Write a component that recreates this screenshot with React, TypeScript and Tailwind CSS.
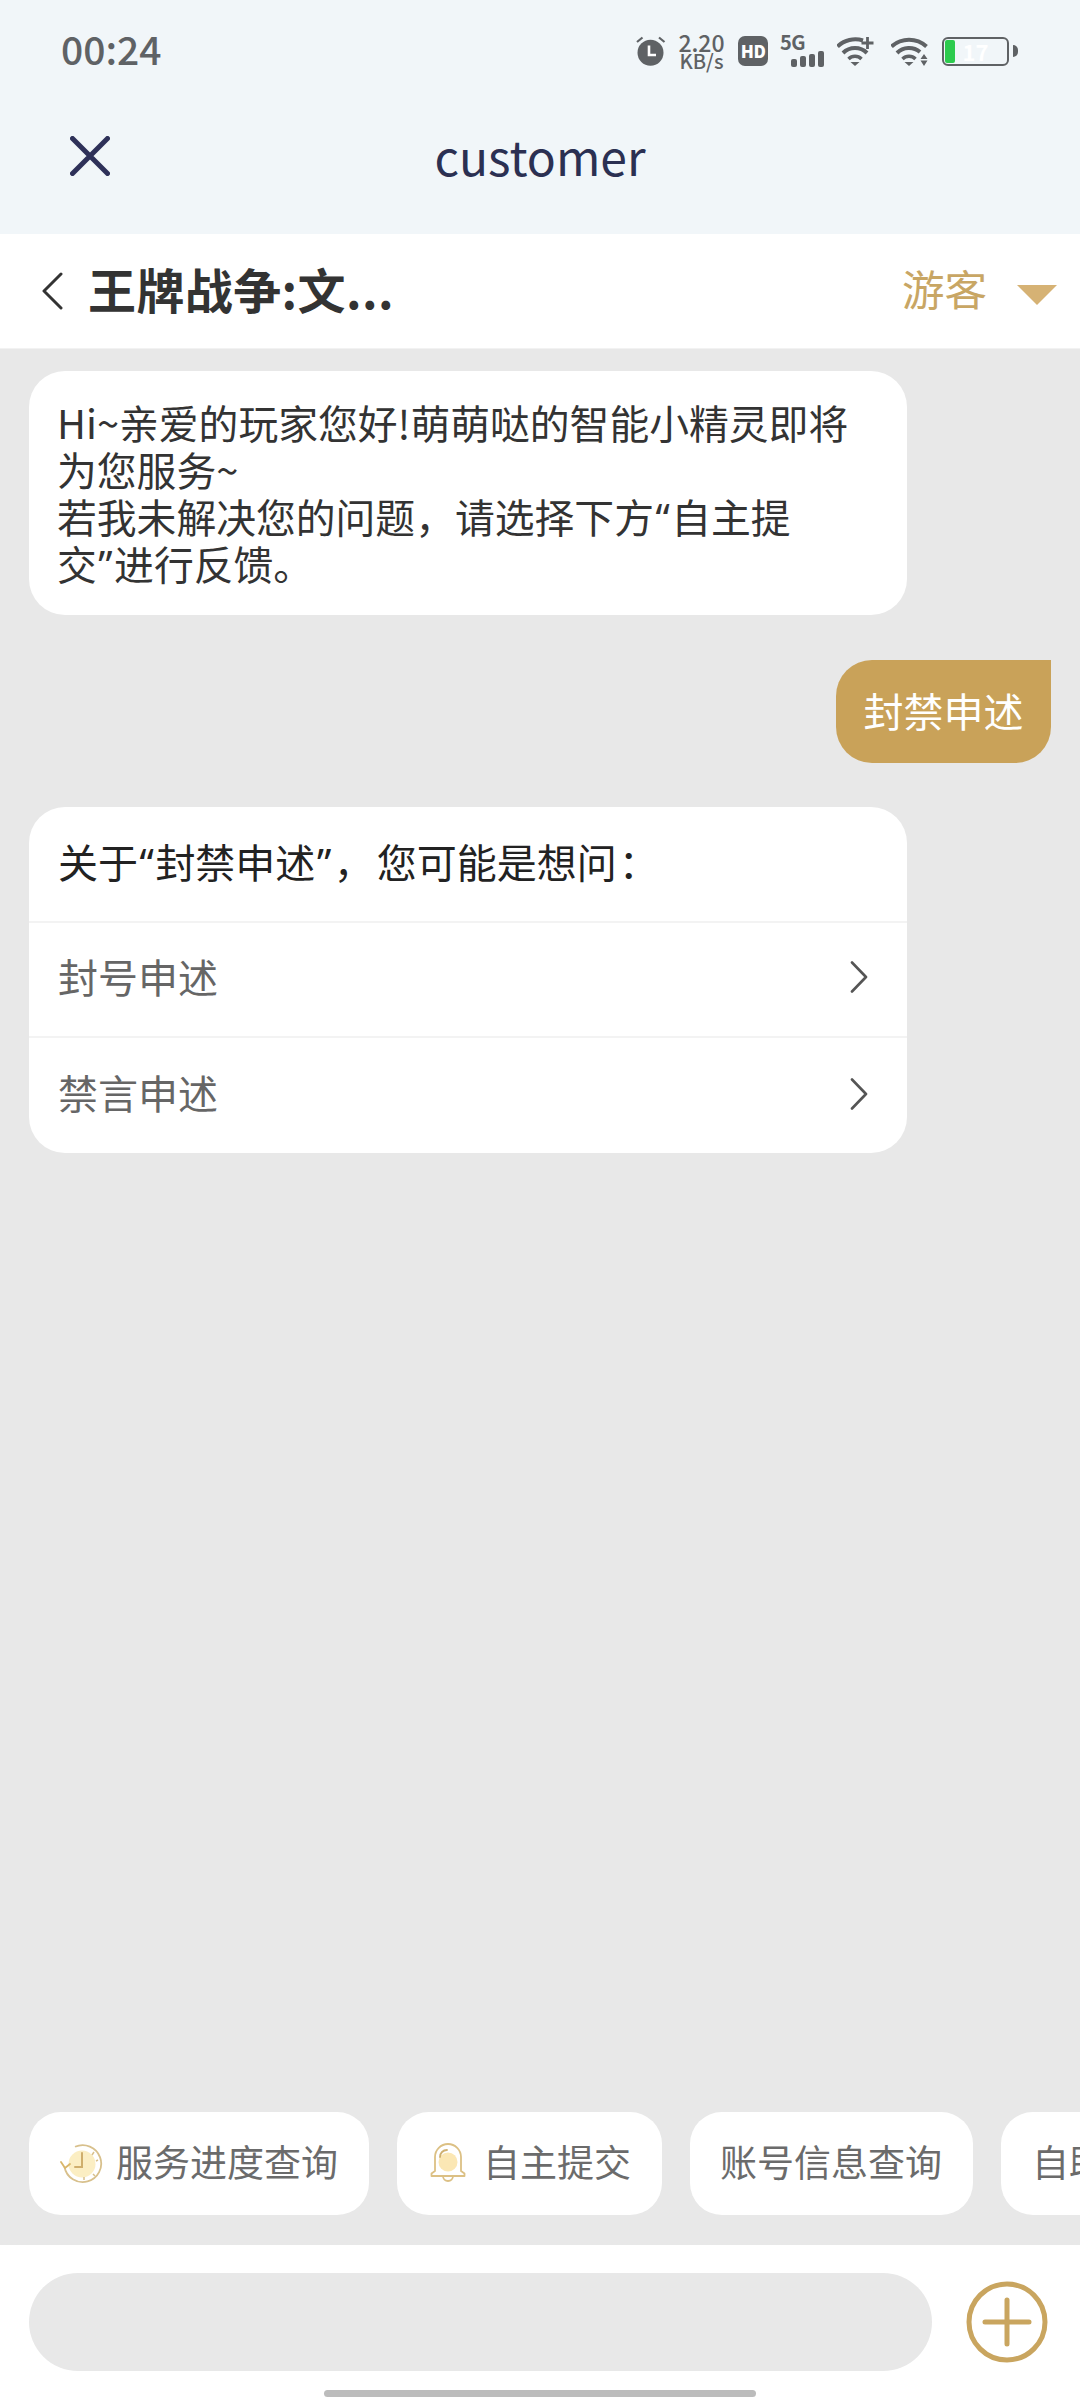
const font = { fontFamily: '"Noto Sans CJK SC", "Noto Sans", sans-serif' };

// curly quotes are full width in the CJK face, the reference has the narrow ones
function Q({ c }: { c: string }) {
  return <span className="leading-none px-[1.5px]" style={{ fontFamily: '"Noto Sans", sans-serif' }}>{c}</span>;
}

function Alarm() {
  return (
    <svg width="30" height="30" viewBox="0 0 30 30" fill="none">
      <circle cx="14.500" cy="16.800" r="13" fill="#5f6265" />
      <path d="M1 6l5.500-4.500M28.500 6 23 1.500" stroke="#5f6265" strokeWidth="2.200" />
      <path d="M13 9.500V19h7" stroke="#fff" strokeWidth="2.600" />
    </svg>
  );
}

function Signal() {
  return (
    <div className="relative w-[44px] h-[31px]">
      <span className="absolute left-0 top-[-8px] text-[20px] leading-[28px] font-bold text-[#5f6265] tracking-[-0.5px]">5G</span>
      <div className="absolute right-0 bottom-0 flex items-end gap-[3px]">
        <div className="w-[6px] h-[8px] rounded-[2px] bg-[#5f6265]" />
        <div className="w-[6px] h-[11px] rounded-[2px] bg-[#5f6265]" />
        <div className="w-[6px] h-[13px] rounded-[2px] bg-[#5f6265]" />
        <div className="w-[6px] h-[16px] rounded-[2px] bg-[#5f6265]" />
      </div>
    </div>
  );
}

function Wifi({ extra }: { extra: "plus" | "arrows" }) {
  return (
    <svg width="37" height="29" viewBox="0 0 37 29" fill="none">
      {extra === "plus" ? (
        <path d="M0.500 9.500A26 26 0 0 1 26 3.500" stroke="#5f6265" strokeWidth="4" />
      ) : (
        <path d="M0.500 9.500A26 26 0 0 1 35.500 9.500" stroke="#5f6265" strokeWidth="4" />
      )}
      <path d={extra === "plus" ? "M6 16A17 17 0 0 1 30 16" : "M6 16A17 17 0 0 1 29 15"} stroke="#5f6265" strokeWidth="4" />
      <path d="M11.500 22A9 9 0 0 1 24.500 22" stroke="#5f6265" strokeWidth="3.400" />
      <path d="M13.500 25h9L18 29z" fill="#5f6265" />
      {extra === "plus" ? (
        <path d="M30.500 0v12M24.500 6h12" stroke="#5f6265" strokeWidth="2.800" />
      ) : (
        <path d="M33 17l3.500 5h-7zM33 29l3.500-5.500h-7z" fill="#5f6265" />
      )}
    </svg>
  );
}

function Battery() {
  return (
    <div className="flex items-center gap-[4px]">
      <div className="relative w-[67px] h-[29px] rounded-[6px] border-2 border-[#5f6265] p-[1px]">
        <div className="w-[10px] h-full rounded-[2px] bg-[#2dcb4e]" />
        <span className="absolute inset-0 flex items-center justify-center text-[22px] leading-none font-bold text-white">17</span>
      </div>
      <div className="w-[5px] h-[12px] rounded-r-full bg-[#5f6265]" />
    </div>
  );
}

function StatusBar() {
  return (
    <div className="h-[102px] pl-[61px] pr-[62px] flex items-center justify-between">
      <span className="text-[39px] font-medium text-[#5f6265] mb-[5px]">00:24</span>
      <div className="flex items-center">
        <Alarm />
        <div className="ml-[13px] w-[45px] pb-[2px] flex flex-col items-center text-[#5f6265]">
          <span className="text-[23px] leading-[20px] font-medium">2.20</span>
          <span className="text-[20px] leading-[17px] font-medium">KB/s</span>
        </div>
        <div className="ml-[14px] w-[30px] h-[30px] rounded-[7px] bg-[#5f6265] flex items-center justify-center text-[17px] font-black text-white tracking-[-0.5px]">
          HD
        </div>
        <div className="ml-[12px]"><Signal /></div>
        <div className="ml-[13px]"><Wifi extra="plus" /></div>
        <div className="ml-[17px]"><Wifi extra="arrows" /></div>
        <div className="ml-[14px]"><Battery /></div>
      </div>
    </div>
  );
}

function ChatHeader() {
  return (
    <div className="h-[115px] bg-white pl-[41px] pr-[23px] flex items-center justify-between border-b border-[#f2f2f2]">
      <div className="flex items-center gap-[25px]">
        <svg width="22" height="38" viewBox="0 0 22 38" fill="none">
          <path d="M20 2 3 19l17 17" stroke="#333" strokeWidth="3" strokeLinecap="round" strokeLinejoin="round" />
        </svg>
        <span className="text-[48px] font-bold text-[#333] tracking-[0.4px] mb-[6px]">王牌战争:文...</span>
      </div>
      <div className="flex items-center gap-[30px]">
        <span className="text-[42.500px] text-[#c8a664] mb-[6px]">游客</span>
        <div className="w-0 h-0 border-x-[20px] border-x-transparent border-t-[20px] border-t-[#d6b274] mt-[8px]" />
      </div>
    </div>
  );
}

function QuestionRow({ label }: { label: string }) {
  return (
    <div className="h-[115px] last:pt-[3px] border-t-2 border-[#f3f3f3] pl-[29px] pr-[39px] flex items-center justify-between text-[40px] text-[#666]">
      <span className="mb-[8px]">{label}</span>
      <svg width="18" height="32" viewBox="0 0 18 32" fill="none" className="mb-[5px]">
        <path d="M2 1.500 16 16 2 30.500" stroke="#555" strokeWidth="2.600" strokeLinecap="round" strokeLinejoin="round" />
      </svg>
    </div>
  );
}

function ClockIcon() {
  return (
    <svg width="44" height="40" viewBox="0 0 44 40" fill="none">
      <circle cx="22" cy="20" r="13.500" fill="#fbeec3" />
      <path d="M4.500 23A18.500 18.500 0 1 0 15 2.800" stroke="#d8c08c" strokeWidth="1.800" />
      <path d="M1 18l4 6 5-4" stroke="#d9b66a" strokeWidth="1.800" strokeLinecap="round" strokeLinejoin="round" />
      <path d="M22 9v14l-7 0" stroke="#cfae6c" strokeWidth="2" strokeLinecap="round" />
      <path d="M36 17l2-1M33 30l2 2M24 36v-3M34 8l-2 3" stroke="#d8c08c" strokeWidth="1.500" />
    </svg>
  );
}

function BellIcon() {
  return (
    <svg width="36" height="41" viewBox="0 0 36 41" fill="none">
      <path d="M5 28V14a13 13 0 0 1 26 0v14l3.500 2.500v2.500h-33v-2.500z" fill="#fff" stroke="#dcc084" strokeWidth="1.800" strokeLinejoin="round" />
      <circle cx="18" cy="19" r="9.500" fill="#fbe7b4" />
      <path d="M10 14c0-4 3-7 7-7" stroke="#cfb071" strokeWidth="1.800" strokeLinecap="round" />
      <path d="M13 33a5 5 0 0 0 10 0" stroke="#dcc084" strokeWidth="1.800" />
    </svg>
  );
}

function Chip({ icon, label, className }: { icon?: React.ReactNode; label: string; className: string }) {
  return (
    <div className={`h-[103px] shrink-0 rounded-[32px] bg-white flex items-center text-[37px] text-[#6b6b6b] ${className}`}>
      {icon}
      <span className="whitespace-nowrap mb-[3px]">{label}</span>
    </div>
  );
}

export default function App() {
  return (
    <div className="w-[1080px] h-[2400px] flex flex-col overflow-hidden bg-[#e8e8e8]" style={font}>
      <div className="h-[234px] bg-[#f1f6f9]">
        <StatusBar />
        <div className="h-[132px] pl-[70px] flex items-center relative">
          <svg width="40" height="40" viewBox="0 0 40 40" fill="none" className="mb-[24px]">
            <path d="M2.500 2.500l35 35M37.500 2.500l-35 35" stroke="#2e3159" strokeWidth="5" strokeLinecap="round" />
          </svg>
          <span className="absolute inset-x-0 top-[-7px] h-[132px] flex items-center justify-center text-[48px] text-[#2b3052] pb-[12px]">customer</span>
        </div>
      </div>

      <ChatHeader />

      <div className="flex-1 flex flex-col pt-[22px] px-[29px]">
        <div className="w-[878px] rounded-[36px] bg-white pl-[28px] pr-[20px] pt-[27px] pb-[29px] text-[39.800px] leading-[47px] text-[#333]">
          Hi~亲爱的玩家您好!萌萌哒的智能小精灵即将
          <br />
          为您服务~
          <br />
          若我未解决您的问题，请选择下方<Q c="“" />自主提
          <br />
          交<Q c="”" />进行反馈。
        </div>

        <div className="self-end mt-[45px] w-[215px] h-[103px] pb-[3px] rounded-[36px] rounded-tr-none bg-[#c9a259] flex items-center justify-center text-[40px] text-white">
          封禁申述
        </div>

        <div className="mt-[44px] w-[878px] pb-[2px] rounded-[36px] bg-white overflow-hidden">
          <div className="h-[114px] pl-[29px] pb-[6px] flex items-center text-[40px] text-[#222]">
            <span>
              关于<Q c="“" />封禁申述<Q c="”" /><span className="ml-[1px] mr-[3px]">，</span>您可能是想问<span className="ml-[2px]">：</span>
            </span>
          </div>
          <QuestionRow label="封号申述" />
          <QuestionRow label="禁言申述" />
        </div>
      </div>

      <div className="pl-[29px] pb-[30px] flex gap-[28px] overflow-hidden">
        <Chip
          className="w-[340px] pl-[31px] gap-[12px]"
          icon={<ClockIcon />}
          label="服务进度查询"
        />
        <Chip
          className="w-[265px] pl-[33px] gap-[17px]"
          icon={<BellIcon />}
          label="自主提交"
        />
        <Chip className="w-[283px] pl-[30px]" label="账号信息查询" />
        <Chip className="w-[200px] pl-[31px]" label="自助服务" />
      </div>

      <div className="h-[155px] bg-white pl-[29px] pt-[28px] flex flex-col">
        <div className="flex items-center">
          <div className="w-[903px] h-[98px] rounded-full bg-[#e8e8e8]" />
          <svg width="82" height="82" viewBox="0 0 82 82" fill="none" className="ml-[34px]">
            <circle cx="41" cy="41" r="38" stroke="#c9a55f" strokeWidth="5" />
            <path d="M41 19v44M19 41h44" stroke="#c9a55f" strokeWidth="5" strokeLinecap="round" />
          </svg>
        </div>
        <div className="w-[432px] h-[7px] rounded-full bg-[#bcbcbc] mt-[19px] ml-[295px]" />
      </div>
    </div>
  );
}
